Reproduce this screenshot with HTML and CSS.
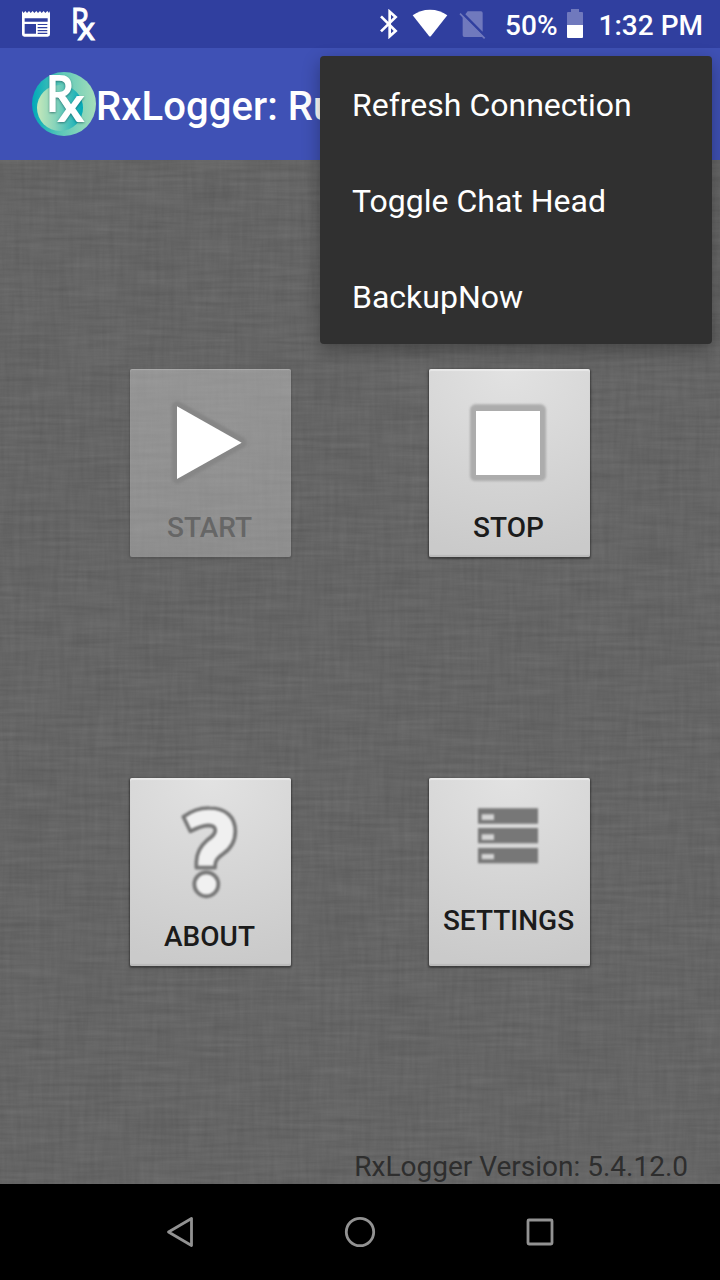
FILE: index.html
```
<!DOCTYPE html>
<html lang="en">
<head>
<meta charset="utf-8">
<title>RxLogger</title>
<link rel="stylesheet" href="styles.css">
</head>
<body>
<div class="screen">
  <header class="status">
    <svg class="news" width="30" height="28" viewBox="0 0 90 84">
      <path fill="#fff" fill-rule="evenodd" d="M3 0l5 6 5-6 5 6 6-6 5 6 6-6 5 6 6-6 5 6 6-6 5 6 6-6 5 6 6-6 5 6 3-6v70q0 7-7 7H10q-7 0-7-7zM11 22v10h69V22zM11 39v29h34V39zM50 39v3h29v-3zM50 48v4h29v-4zM50 57v4h29v-4zM50 65v4h29v-4z"/>
    </svg>
    <svg class="rx" width="26" height="34" viewBox="0 0 26 34">
      <g fill="#fff" stroke="#fff" stroke-width=".9" font-family="Lato, sans-serif" font-weight="400">
        <text transform="translate(-1 26.600) scale(.85 1)" font-size="34">R</text>
        <text transform="translate(5.500 33.500) scale(1.06 1)" font-size="33">x</text>
      </g>
    </svg>
    <span class="spacer"></span>
    <svg class="bt" width="20" height="30" viewBox="0 0 60 90">
      <path fill="none" stroke="#fff" stroke-width="8" d="M6 22l44 44-18 16V8l18 16L6 67"/>
    </svg>
    <svg class="wifi" width="36" height="28" viewBox="0 0 108 84">
      <path fill="#fff" d="M2 19Q24 2 54 2t52 17L57 81q-3 3-6 0z"/>
    </svg>
    <svg class="sim" width="27" height="29" viewBox="0 0 81 87">
      <path fill="#7079bd" d="M26 4h40q5 0 5 5v56L19 13zM11 17l62 62q-2 2-6 2H16q-5 0-5-5z"/>
      <path stroke="#7079bd" stroke-width="5" d="M3 11l74 74"/>
    </svg>
    <span class="pct">50%</span>
    <svg class="batt" width="16" height="30" viewBox="0 0 16 30">
      <path fill="#7079bd" d="M4 0h8v3h3q1 0 1 1v12H0V4q0-1 1-1h3z"/>
      <path fill="#fff" d="M0 16h16v12q0 1-1 1H1q-1 0-1-1z"/>
    </svg>
    <span class="time">1:32 PM</span>
  </header>
  <div class="appbar">
    <svg class="logo" width="64" height="64" viewBox="0 0 64 64">
      <defs>
        <linearGradient id="outer" x1="0" x2="1"><stop offset="0" stop-color="#00a9b8"/><stop offset=".45" stop-color="#5cc8b8"/><stop offset="1" stop-color="#a5deba"/></linearGradient>
        <linearGradient id="inner" x1="0" x2="1"><stop offset="0" stop-color="#c5e8ba"/><stop offset=".4" stop-color="#86d3ba"/><stop offset="1" stop-color="#00a9b8"/></linearGradient>
      </defs>
      <circle cx="32" cy="32" r="32" fill="url(#outer)"/>
      <circle cx="28" cy="36" r="23" fill="url(#inner)"/>
      <g class="logo-text" fill="#fff" stroke="#fff" stroke-width="2.200" font-family="Lato, sans-serif" font-weight="400">
        <text transform="translate(14.400 39.300) scale(.88 1)" font-size="49">R</text>
        <text transform="translate(26.800 48.800) scale(1.060 1)" font-size="46">x</text>
      </g>
    </svg>
    <h1 class="title">RxLogger: Running</h1>
  </div>
  <main class="content">
    <svg class="fabric" width="720" height="1024">
      <defs>
        <filter id="weft" x="0" y="0" width="100%" height="100%" color-interpolation-filters="sRGB">
          <feTurbulence type="fractalNoise" baseFrequency=".016 .22" numOctaves="3" seed="4"/>
          <feColorMatrix values=".1 0 0 0 .347  .1 0 0 0 .347  .1 0 0 0 .347  0 0 0 0 1"/>
        </filter>
        <filter id="warp" x="0" y="0" width="100%" height="100%" color-interpolation-filters="sRGB">
          <feTurbulence type="fractalNoise" baseFrequency=".2 .02" numOctaves="3" seed="9"/>
          <feColorMatrix values=".1 0 0 0 .347  .1 0 0 0 .347  .1 0 0 0 .347  0 0 0 0 1"/>
        </filter>
      </defs>
      <rect width="720" height="1024" filter="url(#weft)"/>
      <rect width="720" height="1024" filter="url(#warp)" opacity=".36"/>
    </svg>
    <div class="tiles">
      <button class="tile disabled">
        <svg class="icon" width="160" height="140" viewBox="30 27 480 420">
          <path class="soft" fill="#868686" stroke="#868686" stroke-width="34" stroke-linejoin="round" d="M172 141v214l191-107z"/>
          <path fill="#fff" d="M171 139v218l194-109z"/>
        </svg>
        <span>START</span>
      </button>
      <button class="tile">
        <svg class="icon" width="160" height="140" viewBox="27 27 480 420">
          <rect class="soft" x="150" y="133" width="228" height="230" rx="16" fill="#acacac"/>
          <rect x="168" y="153" width="192" height="192" fill="#fff"/>
        </svg>
        <span>STOP</span>
      </button>
      <button class="tile">
        <svg class="icon" width="160" height="140" viewBox="30 24 480 420">
          <g class="soft" fill="#f0f0f0" stroke="#757575" stroke-width="11" stroke-linejoin="round">
            <path d="M190 140Q228 113 268 114C318 114 346 142 346 184C346 217 329 239 308 253C287 268 285 276 285 293H229V275C230 248 240 229 261 211C279 198 286 191 286 181Q285 166 265 166Q244 167 211 184z"/>
            <circle cx="259" cy="343" r="36"/>
          </g>
        </svg>
        <span>ABOUT</span>
      </button>
      <button class="tile settings">
        <svg class="icon" width="160" height="124" viewBox="27 24 480 372">
          <g class="soft">
            <path fill="#777" d="M174 115h180v46H174zM174 174h180v46H174zM174 234h180v46H174z"/>
            <path fill="#d4d4d4" d="M185 133h37v17h-37zM185 193h37v17h-37zM185 252h37v16h-37z"/>
          </g>
        </svg>
        <span>SETTINGS</span>
      </button>
    </div>
    <p class="version">RxLogger Version: 5.4.12.0</p>
  </main>
  <nav class="navbar">
    <svg width="40" height="40" viewBox="0 0 40 40"><path d="M31.500 6.500v27L8.500 20z"/></svg>
    <svg width="40" height="40" viewBox="0 0 40 40"><circle cx="20" cy="20" r="13.700"/></svg>
    <svg width="40" height="40" viewBox="0 0 40 40"><rect x="8" y="8" width="24" height="24" rx="1"/></svg>
  </nav>
  <div class="menu">
    <div class="item">Refresh Connection</div>
    <div class="item">Toggle Chat Head</div>
    <div class="item">BackupNow</div>
  </div>
</div>
</body>
</html>
```
FILE: styles.css
```
* { box-sizing: border-box; }
body { margin: 0; font-family: Roboto, "Liberation Sans", sans-serif; }
.screen { position: relative; width: 720px; height: 1280px; overflow: hidden; display: flex; flex-direction: column; }
.status { height: 48px; flex: none; display: flex; align-items: flex-start; background: #303f9f; color: #fff; font-size: 28px; font-weight: 500; line-height: 33px; padding-right: 17px; }
.news { margin: 11px 0 0 21px; }
.rx { margin: 6px 0 0 21px; overflow: visible; }
.spacer { flex: 1; }
.bt { margin-top: 9px; }
.wifi { margin: 9px 0 0 13px; }
.sim { margin: 10px 0 0 11px; }
.pct { margin: 9px 0 0 19px; }
.batt { margin: 9px 0 0 9px; }
.time { margin: 9px 0 0 16px; }
.appbar { height: 112px; flex: none; display: flex; align-items: center; background: #3f51b5; padding-left: 32px; }
.logo { overflow: visible; }
.logo-text { filter: drop-shadow(0 1px 1px rgba(0, 60, 70, .55)); }
.title { margin: 4px 0 0; color: #fff; font-size: 40px; font-weight: 500; letter-spacing: .08px; white-space: nowrap; }
.content { position: relative; flex: none; height: 1024px; display: flex; flex-direction: column; justify-content: space-between; background: #666; }
.fabric { position: absolute; inset: 0; }
.tiles { position: relative; display: grid; grid-template-columns: 161px 161px; column-gap: 138px; row-gap: 221px; padding: 209px 0 0 130px; }
.tile { height: 188px; padding: 0; border: 0; border-radius: 2px; display: flex; flex-direction: column; align-items: flex-start; background: radial-gradient(ellipse 130% 100% at 50% 0, #e2e2e2, #cacaca); box-shadow: inset 0 2px 1px rgba(255, 255, 255, .4), inset 0 -2px 1px rgba(175, 175, 175, .6), 0 1px 2px 1px rgba(0, 0, 0, .4); color: #1b1b1b; font: 500 28px/38px Roboto, sans-serif; }
.disabled { background: linear-gradient(rgba(205, 205, 205, .46), rgba(190, 190, 190, .46)); box-shadow: inset 0 1px 1px rgba(255, 255, 255, .2), 0 1px 2px 1px rgba(0, 0, 0, .15); color: #666; }
.icon { flex: none; display: block; }
.soft { filter: blur(2.5px); }
.tile span { width: 159px; text-align: center; white-space: nowrap; }
.version { position: relative; margin: 0 32px 0 0; text-align: right; color: #2e2e2e; font-size: 28px; line-height: 34px; }
.navbar { height: 96px; flex: none; display: flex; justify-content: center; align-items: center; gap: 140px; background: #000; fill: none; stroke: #929292; stroke-width: 2.8; stroke-linejoin: round; }
.menu { position: absolute; top: 56px; right: 8px; width: 392px; height: 288px; background: #303030; border-radius: 4px; box-shadow: 0 6px 18px rgba(0, 0, 0, .32); color: #fff; }
.item { height: 96px; padding-left: 32px; font-size: 32px; line-height: 98px; }
```
